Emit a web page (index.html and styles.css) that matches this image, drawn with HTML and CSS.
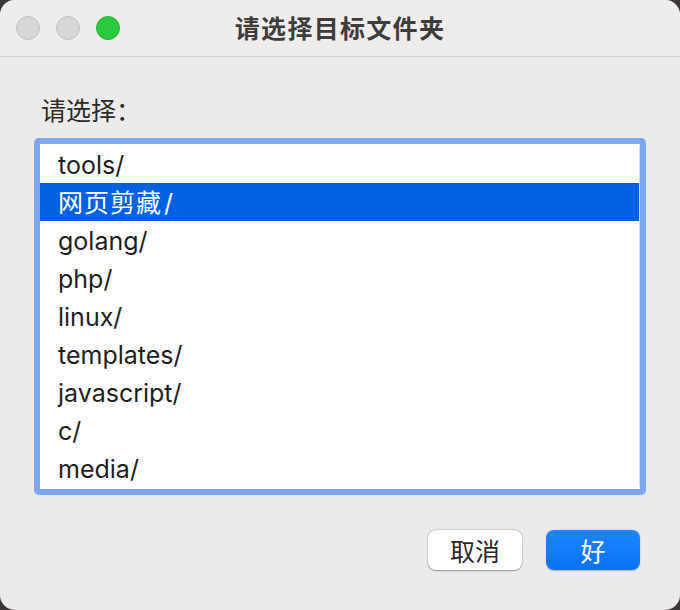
FILE: index.html
```html
<!DOCTYPE html>
<html lang="zh">
<head>
<meta charset="utf-8">
<link rel="stylesheet" href="styles.css">
</head>
<body>
<div class="window">
  <div class="titlebar">
    <div class="lights">
      <span class="light gray"></span>
      <span class="light gray"></span>
      <span class="light green"></span>
    </div>
    <div class="title">请选择目标文件夹</div>
  </div>
  <div class="content">
    <div class="label">请选择：</div>
    <div class="listbox">
      <div class="list">
        <div class="row">tools/</div>
        <div class="row selected"><span class="cjk">网页剪藏</span>/</div>
        <div class="row">golang/</div>
        <div class="row">php/</div>
        <div class="row">linux/</div>
        <div class="row">templates/</div>
        <div class="row">javascript/</div>
        <div class="row">c/</div>
        <div class="row">media/</div>
      </div>
    </div>
    <div class="buttons">
      <button class="btn cancel">取消</button>
      <button class="btn ok">好</button>
    </div>
  </div>
</div>
</body>
</html>
```
FILE: styles.css
```css
html, body {
  margin: 0;
  padding: 0;
  background: #3b3737;
  width: 680px;
  height: 610px;
  overflow: hidden;
}
.window {
  width: 680px;
  height: 610px;
  background: #ecebea;
  border-radius: 15px;
  overflow: hidden;
  font-family: "Inter", "Noto Sans CJK SC", sans-serif;
  display: flex;
  flex-direction: column;
}
.titlebar {
  height: 56px;
  border-bottom: 1px solid #d6d5d4;
  background: #eeedec;
  position: relative;
  display: flex;
  align-items: center;
  justify-content: center;
  flex-shrink: 0;
}
.lights {
  position: absolute;
  left: 16px;
  top: 16px;
  display: flex;
  gap: 16px;
}
.light {
  width: 24px;
  height: 24px;
  border-radius: 50%;
  box-sizing: border-box;
}
.light.gray {
  background: #d9d7d6;
  border: 1px solid #c3c1c0;
}
.light.green {
  background: #2ac940;
  border: 1px solid #25b33a;
}
.title {
  font-family: "Noto Sans CJK SC", sans-serif;
  font-weight: 700;
  font-size: 25px;
  color: #3e3d3c;
  letter-spacing: 1.3px;
  margin-top: -2px;
}
.content {
  padding: 37px 34px 0 34px;
  display: flex;
  flex-direction: column;
}
.label {
  font-family: "Inter", "Noto Sans CJK SC", sans-serif;
  font-size: 25px;
  line-height: 34px;
  color: #2b2a29;
  padding-left: 7px;
  margin-bottom: 10px;
}
.listbox {
  border: 6px solid #7da8ef;
  border-radius: 5px;
  background: #ffffff;
  height: 344px;
  padding-top: 1px;
  box-sizing: content-box;
  overflow: hidden;
}
.row {
  height: 38px;
  line-height: 40px;
  font-size: 25px;
  color: #1e1e1e;
  padding-left: 18px;
  border-right: 1px solid #d4dbe6;
}
.row .cjk {
  letter-spacing: 1px;
  margin-right: 2px;
}
.row.selected {
  background: #0062e0;
  color: #ffffff;
}
.buttons {
  display: flex;
  justify-content: flex-end;
  gap: 24px;
  margin-top: 35px;
  padding-right: 6px;
}
.btn {
  width: 94px;
  height: 40px;
  border-radius: 8px;
  font-family: "Noto Sans CJK SC", sans-serif;
  font-size: 25px;
  line-height: 40px;
  border: none;
  padding: 0;
}
.btn.cancel {
  background: #ffffff;
  color: #2a2929;
  box-shadow: 0 0.5px 1.5px rgba(0,0,0,0.35), 0 0 0 0.5px rgba(0,0,0,0.12);
}
.btn.ok {
  background: linear-gradient(#2185ff, #0d70f6);
  color: #ffffff;
  box-shadow: 0 0.5px 1.5px rgba(0,0,0,0.25);
}
```
